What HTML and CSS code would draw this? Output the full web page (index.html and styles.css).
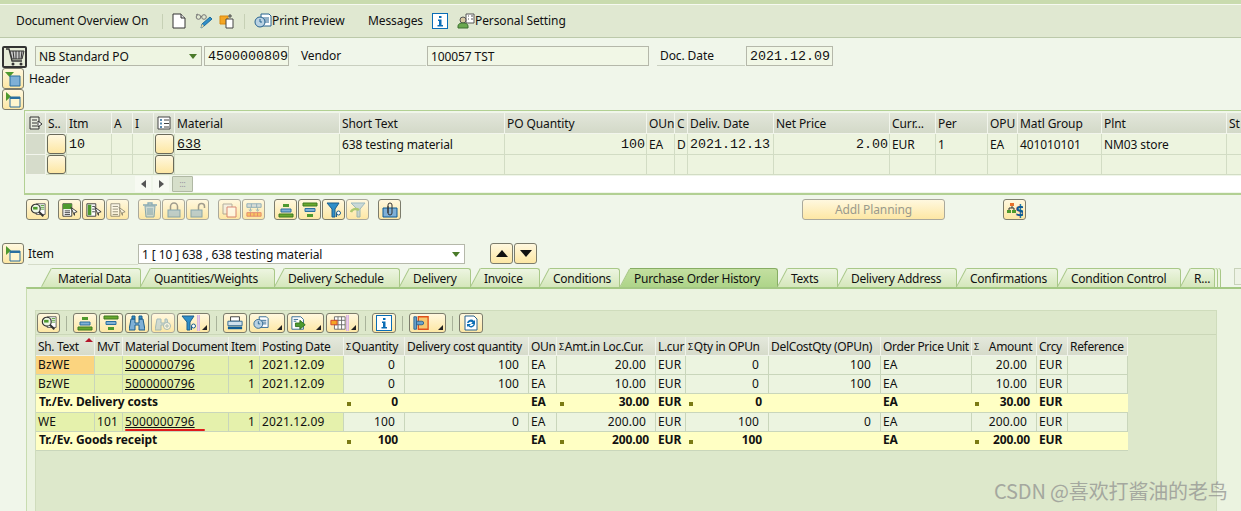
FILE: index.html
```html
<!DOCTYPE html>
<html lang="en">
<head>
<meta charset="utf-8">
<title>Purchase Order</title>
<link rel="stylesheet" href="styles.css">
</head>
<body>
<svg class="defs" width="0" height="0">
<defs>
<symbol id="i-page" viewBox="0 0 16 16"><path d="M2 1h8l4 4v10H2z" fill="#fff" stroke="#333"/><path d="M10 1v4h4" fill="#ddd" stroke="#333"/></symbol>
<symbol id="i-glasses" viewBox="0 0 18 16"><circle cx="3.500" cy="4" r="2.300" fill="none" stroke="#777"/><circle cx="9" cy="4" r="2.300" fill="none" stroke="#777"/><path d="M1 2 3 1M6 3.500h1" stroke="#777" fill="none"/><path d="M6 15l1-4 8-7 2 2-8 7z" fill="#2f8fc9" stroke="#1d6b9c"/><path d="M6 15l1-4 2 2z" fill="#f4d89a"/></symbol>
<symbol id="i-orange" viewBox="0 0 16 16"><path d="M1 3h8v8H1z" fill="#f5a623" stroke="#d98a10"/><path d="M7 6h7v9H7z" fill="#fff" stroke="#444"/><path d="M11 1v4M9 3h4" stroke="#444"/></symbol>
<symbol id="i-preview" viewBox="0 0 18 16"><path d="M7 1h8l2 2v10H7z" fill="#fff" stroke="#27628f"/><path d="M9 5h6M9 7h6M9 9h6" stroke="#27628f"/><circle cx="6" cy="9" r="5" fill="#b9d2e3" stroke="#27628f"/><path d="M6 6v3h2" stroke="#27628f" fill="none"/></symbol>
<symbol id="i-info" viewBox="0 0 16 16"><rect x=".5" y=".5" width="15" height="15" fill="#fff" stroke="#0a6db5"/><rect x="7" y="3" width="2.500" height="2" fill="#0a6db5"/><path d="M6 6.500h3.500V12H11v1.500H5.500V12H7V8H6z" fill="#0a6db5"/></symbol>
<symbol id="i-person" viewBox="0 0 18 16"><path d="M9 1h8v9H9z" fill="#fff" stroke="#555"/><path d="M11 3h1M14 3h2M11 6h1M14 6h2" stroke="#555"/><circle cx="6" cy="7" r="3" fill="#d8c9a0" stroke="#555"/><path d="M1 15v-2c0-2 2-3 5-3s5 1 5 3v2z" fill="#6aa84f" stroke="#3c7030"/></symbol>
<symbol id="i-cart" viewBox="0 0 20 18"><path d="M1 1h3l3 12h10" fill="none" stroke="#333" stroke-width="1.300"/><path d="M5 3h14l-2 8H7z" fill="#ccc" stroke="#333"/><path d="M8 3l1 8M11 3v8M14 3v8M17 3l-1 8" stroke="#333"/><circle cx="8" cy="16" r="1.500" fill="#333"/><circle cx="16" cy="16" r="1.500" fill="#333"/></symbol>
<symbol id="i-collapse" viewBox="0 0 16 16"><path d="M0 1h9L4.500 6z" fill="#4e9a2e"/><path d="M5 5h10v10H5z" fill="#7fb0d6" stroke="#2a6fa0"/></symbol>
<symbol id="i-expand" viewBox="0 0 16 16"><path d="M1 0v9l5-4.500z" fill="#4e9a2e"/><path d="M5 5h10v10H5z" fill="#fff6cf" stroke="#2a6fa0"/><path d="M5 5h10v2H5z" fill="#2a6fa0"/></symbol>
<symbol id="i-zoom" viewBox="0 0 18 16"><path d="M7 1h10v12H7z" fill="#fff" stroke="#555"/><path d="M12 3h4M12 5h4M12 7h4" stroke="#4e9a2e"/><circle cx="6.500" cy="6.500" r="5" fill="#eef7e6" stroke="#333" stroke-width="1.300"/><path d="M3.500 6h5" stroke="#4e9a2e" stroke-width="3"/><path d="M10 10l5 5" stroke="#333" stroke-width="2.200"/></symbol>
<symbol id="i-selall" viewBox="0 0 18 16"><path d="M1 1h10v14H1z" fill="#fff" stroke="#333"/><path d="M1 1h10v6H1z" fill="#4e9a2e"/><path d="M3 9h6M3 11h6M3 13h6" stroke="#333"/><path d="M10 5l7 5-3 1v3z" fill="#fff" stroke="#333"/></symbol>
<symbol id="i-selblk" viewBox="0 0 18 16"><path d="M1 1h10v14H1z" fill="#fff" stroke="#333"/><path d="M2 2h4v12H2z" fill="#4e9a2e"/><path d="M7 4h3M7 7h3M7 10h3" stroke="#333"/><path d="M10 5l7 5-3 1v3z" fill="#fff" stroke="#333"/></symbol>
<symbol id="i-desel" viewBox="0 0 18 16"><path d="M1 1h10v14H1z" fill="#fff" stroke="#333"/><path d="M3 4h6M3 7h6M3 10h6M3 13h6" stroke="#333"/><path d="M10 5l7 5-3 1v3z" fill="#fff" stroke="#333"/></symbol>
<symbol id="i-trash" viewBox="0 0 16 16"><path d="M1 3h14M6 3V1h4v2" fill="none" stroke="#2a6fa0" stroke-width="1.300"/><path d="M3 4h10l-1 11H4z" fill="#a9c8de" stroke="#2a6fa0"/><path d="M6 6v7M8 6v7M10 6v7" stroke="#2a6fa0"/></symbol>
<symbol id="i-lock" viewBox="0 0 16 16"><path d="M4.500 8V4.500a3.500 3.500 0 0 1 7 0V8" fill="none" stroke="#555" stroke-width="1.500"/><rect x="2" y="8" width="12" height="7" fill="#8db4d3" stroke="#2a6fa0"/></symbol>
<symbol id="i-unlock" viewBox="0 0 16 16"><path d="M8.500 8V4.500a3 3 0 0 1 6 0V6" fill="none" stroke="#555" stroke-width="1.500"/><rect x="1" y="8" width="11" height="7" fill="#8db4d3" stroke="#2a6fa0"/></symbol>
<symbol id="i-copy" viewBox="0 0 16 16"><path d="M1 2h9v10H1z" fill="#eee" stroke="#777"/><path d="M5 5h9v10H5z" fill="#fff" stroke="#b33"/></symbol>
<symbol id="i-cols" viewBox="0 0 18 16"><path d="M1 1h16v4H1z" fill="#bcd" stroke="#2a6fa0"/><path d="M6 1v4M12 1v4" stroke="#2a6fa0"/><path d="M5 6v2M3.500 7.500 5 9.500l1.500-2M13 6v2M11.500 7.500l1.500 2 1.500-2" stroke="#2a6fa0" fill="none"/><path d="M1 11h16v4H1z" fill="#f5a623" stroke="#c33"/><path d="M5 11v4M9 11v4M13 11v4" stroke="#c33"/></symbol>
<symbol id="i-asc" viewBox="0 0 16 16"><path d="M5 2h6v3H5z" fill="#4e9a2e"/><path d="M3 7h10v3H3z" fill="#7fb0d6" stroke="#2a6fa0"/><path d="M1 12h14v3H1z" fill="#6aa82e" stroke="#3c7a20"/></symbol>
<symbol id="i-desc" viewBox="0 0 16 16"><path d="M1 1h14v3H1z" fill="#6aa82e" stroke="#3c7a20"/><path d="M3 6.500h10v3H3z" fill="#7fb0d6" stroke="#2a6fa0"/><path d="M5 12h6v3H5z" fill="#4e9a2e"/></symbol>
<symbol id="i-filter" viewBox="0 0 16 16"><path d="M1 1h12L9 7v8H6V7z" fill="#2f8fc9" stroke="#1d5f8c"/><circle cx="12.500" cy="11" r="2" fill="#fff" stroke="#1d5f8c"/><path d="M10.500 11v4" stroke="#1d5f8c"/></symbol>
<symbol id="i-unfilter" viewBox="0 0 16 16"><path d="M1 1h14l-5 6v8H7V7z" fill="#9fc3de" stroke="#4f8bb0"/><path d="M1 10c1-3 5-4 8-2" fill="none" stroke="#6aa82e" stroke-width="2.500"/></symbol>
<symbol id="i-clip" viewBox="0 0 16 16"><path d="M1 6h14v9H1z" fill="#7fb0d6" stroke="#0d5b94"/><path d="M6 11V3a2 2 0 0 1 4 0v8a2 2 0 0 1-4 0V4" fill="none" stroke="#333"/></symbol>
<symbol id="i-dollar" viewBox="0 0 16 16"><path d="M3 1h4v3H3z" fill="#e8702a"/><path d="M0 8h4v3H0zM5 8h4v3H5z" fill="#4e9a2e"/><path d="M5 4v2M2 8V6h5v2" fill="none" stroke="#333"/><text class="dollar" x="8" y="14">$</text></symbol>
<symbol id="i-binoc" viewBox="0 0 16 16"><path d="M2 4h4v4h4V4h4l2 11H10V10H6v5H0z" fill="#7fb0d6" stroke="#1d5f8c"/><path d="M3 1h3v3H3zM10 1h3v3h-3z" fill="#2f8fc9" stroke="#1d5f8c"/></symbol>
<symbol id="i-binplus" viewBox="0 0 16 16"><path d="M2 4h4v4h4V4h2l1 5H10v1H6v5H0z" fill="#a9c8de" stroke="#5f92b0"/><circle cx="12" cy="11" r="3.500" fill="#fff" stroke="#5f92b0"/><path d="M10 11h4M12 9v4" stroke="#5f92b0"/></symbol>
<symbol id="i-print" viewBox="0 0 18 16"><path d="M4 1h10v5H4z" fill="#fff" stroke="#333"/><path d="M1 6h16v5H1z" fill="#cfe0ec" stroke="#27628f"/><path d="M1 12h16v3H1z" fill="#0d5b94"/></symbol>
<symbol id="i-export" viewBox="0 0 18 16"><path d="M1 1h10l3 3v11H1z" fill="#fff" stroke="#27628f"/><path d="M3 4h5M3 6h3" stroke="#27628f"/><path d="M5 8h5V5l6 5-6 5v-3H5z" fill="#4e9a2e" stroke="#2f6f1c"/></symbol>
<symbol id="i-layout" viewBox="0 0 18 16"><path d="M5 1h12v14H5z" fill="#fff" stroke="#666"/><path d="M9 1v14M13 1v14M5 5h12M5 10h12" stroke="#666"/><path d="M1 5h7v5H1z" fill="#f5a623" stroke="#d0402a"/></symbol>
<symbol id="i-bridge" viewBox="0 0 18 16"><path d="M6 1h11v14H6z" fill="#f6c870" stroke="#e0501a" stroke-width="1.500"/><path d="M1 1h3v14H1z" fill="#6aa0c8" stroke="#27628f"/><path d="M4 6h6a2 2 0 0 1 0 4H4z" fill="#6aa0c8" stroke="#27628f"/></symbol>
<symbol id="i-refresh" viewBox="0 0 16 16"><path d="M2 1h9l3 3v11H2z" fill="#fff" stroke="#27628f"/><path d="M4 8a4 4 0 0 1 7-2l1-1v4H8l1.500-1.500A2.500 2.500 0 0 0 5.500 8zM12 9a4 4 0 0 1-7 2l-1 1V9h4l-1.500 1.500A2.500 2.500 0 0 0 10.500 9z" fill="#0d6fb5"/></symbol>
<symbol id="i-colsel" viewBox="0 0 14 14"><path d="M1 1h9v12H1z" fill="#e8ecdf" stroke="#333"/><path d="M3 4h5M3 7h5M3 10h5" stroke="#333"/><path d="M9 5l4 3-4 3z" fill="#fff" stroke="#333"/></symbol>
<symbol id="i-config" viewBox="0 0 14 14"><path d="M1 1h12v12H1z" fill="#fff" stroke="#444"/><path d="M3 3h2v2H3zM3 6.500h2v2H3zM3 10h2v2H3z" fill="#5a8ab0"/><path d="M7 4h5M7 7.500h5M7 11h5" stroke="#444"/></symbol>
</defs>
</svg>

<div class="strip"></div>
<div class="topbar">
  <span class="tb-text tb-first">Document Overview On</span>
  <i class="tsep"></i>
  <svg class="ic16 tb-page"><use href="#i-page"/></svg>
  <svg class="ic18 tb-gl"><use href="#i-glasses"/></svg>
  <svg class="ic16 tb-or"><use href="#i-orange"/></svg>
  <i class="tsep tsep2"></i>
  <svg class="ic18"><use href="#i-preview"/></svg>
  <span class="tb-text tb-pp">Print Preview</span>
  <span class="tb-text tb-msg">Messages</span>
  <svg class="ic16 tb-info"><use href="#i-info"/></svg>
  <svg class="ic18 tb-pers"><use href="#i-person"/></svg>
  <span class="tb-text tb-ps">Personal Setting</span>
</div>

<div class="headrow">
  <span class="cartbtn"><svg class="ic-cart"><use href="#i-cart"/></svg></span>
  <span class="select sel-doc">NB Standard PO<b class="caret"></b></span>
  <span class="field f-num mono">4500000809</span>
  <span class="lab lab-v">Vendor</span>
  <span class="field f-vendor">100057 TST</span>
  <span class="lab lab-d">Doc. Date</span>
  <span class="field f-date mono">2021.12.09</span>
</div>

<div class="hdrsec">
  <div class="hdr-ic">
    <span class="ib b22"><svg class="ic16"><use href="#i-collapse"/></svg></span>
    <span class="ib b22"><svg class="ic16"><use href="#i-expand"/></svg></span>
  </div>
  <span class="hdr-t">Header</span>
</div>

<div class="items">
  <div class="igrid">
    <div class="h ctr"><svg class="ic14"><use href="#i-colsel"/></svg></div><div class="h">S..</div><div class="h">Itm</div><div class="h">A</div><div class="h">I</div><div class="h ctr"><svg class="ic14"><use href="#i-config"/></svg></div><div class="h">Material</div><div class="h">Short Text</div><div class="h">PO Quantity</div><div class="h">OUn</div><div class="h">C</div><div class="h">Deliv. Date</div><div class="h">Net Price</div><div class="h">Curr...</div><div class="h">Per</div><div class="h">OPU</div><div class="h">Matl Group</div><div class="h">Plnt</div><div class="h">St</div>

    <div class="sel"></div><div class="c nb"><b class="cb"></b></div><div class="c mono">10</div><div class="c"></div><div class="c"></div><div class="c nb"><b class="cb"></b></div><div class="c mono"><u>638</u></div><div class="c">638 testing material</div><div class="c mono r">100</div><div class="c">EA</div><div class="c">D</div><div class="c mono">2021.12.13</div><div class="c mono r">2.00</div><div class="c">EUR</div><div class="c">1</div><div class="c">EA</div><div class="c">401010101</div><div class="c">NM03 store</div><div class="c"></div>

    <div class="sel"></div><div class="c nb"><b class="cb"></b></div><div class="c"></div><div class="c"></div><div class="c"></div><div class="c nb"><b class="cb"></b></div><div class="c"></div><div class="c"></div><div class="c"></div><div class="c"></div><div class="c"></div><div class="c"></div><div class="c"></div><div class="c"></div><div class="c"></div><div class="c"></div><div class="c"></div><div class="c"></div><div class="c"></div>
  </div>
  <div class="hscroll">
    <span class="sb"><b class="al"></b></span>
    <span class="sb"><b class="ar"></b></span>
    <span class="handle">:::</span>
    <span class="track"></span>
  </div>
</div>

<div class="tbtns">
  <span class="ib"><svg class="ic16"><use href="#i-zoom"/></svg></span>
  <span class="ib gapl"><svg class="ic16"><use href="#i-selall"/></svg></span>
  <span class="ib"><svg class="ic16"><use href="#i-selblk"/></svg></span>
  <span class="ib off"><svg class="ic16"><use href="#i-desel"/></svg></span>
  <span class="ib off gapl"><svg class="ic16"><use href="#i-trash"/></svg></span>
  <span class="ib off"><svg class="ic16"><use href="#i-lock"/></svg></span>
  <span class="ib off"><svg class="ic16"><use href="#i-unlock"/></svg></span>
  <span class="ib off gapl"><svg class="ic16"><use href="#i-copy"/></svg></span>
  <span class="ib off"><svg class="ic16"><use href="#i-cols"/></svg></span>
  <span class="ib gapl"><svg class="ic16"><use href="#i-asc"/></svg></span>
  <span class="ib"><svg class="ic16"><use href="#i-desc"/></svg></span>
  <span class="ib"><svg class="ic16"><use href="#i-filter"/></svg></span>
  <span class="ib off"><svg class="ic16"><use href="#i-unfilter"/></svg></span>
  <span class="ib gapl"><svg class="ic16"><use href="#i-clip"/></svg></span>
  <span class="planbtn">Addl Planning</span>
  <span class="ib finbtn"><svg class="ic16"><use href="#i-dollar"/></svg></span>
</div>

<div class="itemrow">
  <span class="ib b22"><svg class="ic16"><use href="#i-expand"/></svg></span>
  <span class="item-l">Item</span>
  <span class="select sel-item">1 [ 10 ] 638 , 638 testing material<b class="caret"></b></span>
  <span class="ib nav"><b class="tri-up"></b></span>
  <span class="ib nav"><b class="tri-dn"></b></span>
</div>

<div class="tabs">
  <span class="tab tab-first">Material Data</span>
  <span class="tab">Quantities/Weights</span>
  <span class="tab">Delivery Schedule</span>
  <span class="tab">Delivery</span>
  <span class="tab">Invoice</span>
  <span class="tab">Conditions</span>
  <span class="tab act">Purchase Order History</span>
  <span class="tab">Texts</span>
  <span class="tab">Delivery Address</span>
  <span class="tab">Confirmations</span>
  <span class="tab">Condition Control</span>
  <span class="tab tab-last">R...</span>
  <span class="tabnav"></span>
</div>

<div class="panel">
  <div class="group">
    <div class="gtools">
      <span class="ib"><svg class="ic16"><use href="#i-zoom"/></svg></span>
      <i class="gsep"></i>
      <span class="ib w24"><svg class="ic16"><use href="#i-asc"/></svg></span>
      <span class="ib w24"><svg class="ic16"><use href="#i-desc"/></svg></span>
      <span class="ib w24"><svg class="ic16"><use href="#i-binoc"/></svg></span>
      <span class="ib w24 off"><svg class="ic16"><use href="#i-binplus"/></svg></span>
      <span class="ib dd dd33"><svg class="ic16"><use href="#i-filter"/></svg><i class="pink"></i></span>
      <i class="gsep"></i>
      <span class="ib w24"><svg class="ic16"><use href="#i-print"/></svg></span>
      <span class="ib dd dd36"><svg class="ic16"><use href="#i-preview"/></svg></span>
      <span class="ib dd dd37"><svg class="ic16"><use href="#i-export"/></svg></span>
      <span class="ib dd dd33"><svg class="ic16"><use href="#i-layout"/></svg><i class="pink"></i></span>
      <i class="gsep"></i>
      <span class="ib w24"><svg class="ic16"><use href="#i-info"/></svg></span>
      <i class="gsep"></i>
      <span class="ib dd dd37"><svg class="ic16"><use href="#i-bridge"/></svg></span>
      <i class="gsep"></i>
      <span class="ib w24"><svg class="ic16"><use href="#i-refresh"/></svg></span>
    </div>
    <div class="hist">
      <div class="gh sorted">Sh. Text</div><div class="gh">MvT</div><div class="gh">Material Document</div><div class="gh">Item</div><div class="gh">Posting Date</div><div class="gh"><em>Σ</em>Quantity</div><div class="gh">Delivery cost quantity</div><div class="gh">OUn</div><div class="gh"><em>Σ</em>Amt.in Loc.Cur.</div><div class="gh">L.cur</div><div class="gh"><em>Σ</em>Qty in OPUn</div><div class="gh">DelCostQty (OPUn)</div><div class="gh">Order Price Unit</div><div class="gh"><em>Σ</em><span class="amt">Amount</span></div><div class="gh">Crcy</div><div class="gh">Reference</div>

      <div class="g k pick">BzWE</div><div class="g k"></div><div class="g k"><u>5000000796</u></div><div class="g k r">1</div><div class="g k">2021.12.09</div><div class="g r">0</div><div class="g r">100</div><div class="g">EA</div><div class="g r">20.00</div><div class="g">EUR</div><div class="g r">0</div><div class="g r">100</div><div class="g">EA</div><div class="g r">20.00</div><div class="g">EUR</div><div class="g"></div>

      <div class="g k">BzWE</div><div class="g k"></div><div class="g k"><u>5000000796</u></div><div class="g k r">1</div><div class="g k">2021.12.09</div><div class="g r">0</div><div class="g r">100</div><div class="g">EA</div><div class="g r">10.00</div><div class="g">EUR</div><div class="g r">0</div><div class="g r">100</div><div class="g">EA</div><div class="g r">10.00</div><div class="g">EUR</div><div class="g"></div>

      <div class="t s5">Tr./Ev. Delivery costs</div><div class="t r mk">0</div><div class="t"></div><div class="t">EA</div><div class="t r mk">30.00</div><div class="t">EUR</div><div class="t r mk">0</div><div class="t"></div><div class="t">EA</div><div class="t r mk">30.00</div><div class="t">EUR</div><div class="t"></div>

      <div class="g k">WE</div><div class="g k">101</div><div class="g k"><u>5000000796</u></div><div class="g k r">1</div><div class="g k">2021.12.09</div><div class="g r">100</div><div class="g r">0</div><div class="g">EA</div><div class="g r">200.00</div><div class="g">EUR</div><div class="g r">100</div><div class="g r">0</div><div class="g">EA</div><div class="g r">200.00</div><div class="g">EUR</div><div class="g"></div>

      <div class="t s5">Tr./Ev. Goods receipt</div><div class="t r mk">100</div><div class="t"></div><div class="t">EA</div><div class="t r mk">200.00</div><div class="t">EUR</div><div class="t r mk">100</div><div class="t"></div><div class="t">EA</div><div class="t r mk">200.00</div><div class="t">EUR</div><div class="t"></div>
      <i class="redline"></i>
    </div>
  </div>
</div>
<div class="watermark">CSDN @喜欢打酱油的老鸟</div>
</body>
</html>
```

FILE: styles.css
```css
* { box-sizing: border-box; }
html, body { margin: 0; height: 511px; overflow: hidden; }
body {
  width: 1241px; display: flex; flex-direction: column; position: relative;
  background: #f0f6ea; color: #111;
  font: 12px/14px "Noto Sans", sans-serif; letter-spacing: -.1px;
}
.defs { position: absolute; }
svg { display: block; flex: none; }
u { text-decoration: underline; }
em { font-style: normal; font-size: 9px; }
.dollar { font: bold 15px "DejaVu Sans", sans-serif; fill: #0d5b94; text-anchor: start; }
.ic16 { width: 16px; height: 16px; }
.ic18 { width: 18px; height: 16px; }
.ic14 { width: 14px; height: 14px; }
.ic-cart { width: 20px; height: 18px; }
.mono { font-family: "Liberation Mono", monospace; font-size: 13.33px; letter-spacing: 0; }

.strip { height: 4px; background: #c9dbae; flex: none; }
.topbar {
  height: 34px; flex: none; display: flex; align-items: center;
  background: #e0e8d1; border-top: 1px solid #f6f9f0; border-bottom: 1px solid #bcc9aa;
}
.tb-text { white-space: nowrap; }
.tb-first { margin-left: 16px; width: 146px; }
.tsep { width: 1px; height: 15px; background: #c6d0b5; }
.tb-page { margin-left: 8px; }
.tb-gl { margin-left: 8px; }
.tb-or { margin-left: 6px; }
.tsep2 { margin-left: 9px; }
.tsep2 + svg { margin-left: 9px; }
.tb-pp { width: 96px; }
.tb-msg { width: 64px; }
.tb-pers { margin-left: 9px; }

.headrow { height: 21px; margin-top: 8px; flex: none; display: flex; }
.cartbtn {
  width: 25px; height: 22px; margin-left: 2px; border: 2px solid #333; border-radius: 2px;
  background: #e6ecd8; display: flex; align-items: center; justify-content: center;
}
.select, .field {
  height: 20px; border: 1px solid #b5b8aa; background: #f1f7e6;
  padding-left: 3px; line-height: 19px; white-space: nowrap; position: relative; display: block;
}
.sel-doc { width: 167px; margin-left: 8px; background: #eef5e2; }
.caret {
  position: absolute; right: 4px; top: 7px; width: 0; height: 0;
  border: 4px solid transparent; border-top: 5px solid #4a7a2a; border-bottom: 0;
}
.f-num { width: 85px; margin-left: 2px; }
.lab { height: 20px; line-height: 20px; border-bottom: 1px solid #c9cfc0; padding-left: 3px; }
.lab-v { width: 128px; margin-left: 9px; }
.f-vendor { width: 222px; margin-left: 1px; }
.lab-d { width: 88px; margin-left: 8px; }
.f-date { width: 87px; margin-left: 1px; }

.hdrsec { height: 42px; margin-top: 1px; flex: none; display: flex; padding-left: 2px; }
.hdr-ic { display: flex; flex-direction: column; }
.hdr-t { margin: 4px 0 0 5px; }

.ib {
  width: 23px; height: 21px; flex: none; display: flex; align-items: center; justify-content: center;
  border: 1px solid #7c7c6c; border-radius: 3px;
  background: linear-gradient(#fff8df, #fde7a4);
}
.ib.off { border-color: #aaa99c; }
.ib.off svg { opacity: .55; }
.b22 { width: 22px; }

.items {
  height: 85px; margin-left: 24px; flex: none;
  border-top: 1px solid #b2d093; border-left: 1px solid #b2d093; border-bottom: 2px solid #b2d093;
  padding: 2px 0 0 1px; overflow: hidden;
}
.igrid {
  display: grid; width: 1300px;
  grid-template-columns: 20px 21px 45px 21px 21px 21px 165px 165px 142px 28px 13px 86px 116px 46px 52px 30px 84px 125px 60px;
  grid-template-rows: 21px 21px 20px;
}
.h {
  background: linear-gradient(#e2e6da, #d3d9c8); border-right: 1px solid #f2f5ec; border-bottom: 1px solid #f2f5ec;
  padding-left: 2px; line-height: 22px; white-space: nowrap; overflow: hidden;
}
.ctr { display: flex; align-items: center; justify-content: center; padding: 0; }
.c {
  background: #edf4df; border-right: 1px solid #d2dcc4; border-bottom: 1px solid #d2dcc4;
  padding: 0 2px; line-height: 22px; white-space: nowrap; overflow: hidden;
}
.c.nb { padding: 0 0 0 1px; }
.c.r { text-align: right; padding-right: 1px; }
.sel { background: #d6dccb; border-right: 1px solid #f2f5ec; border-bottom: 1px solid #f2f5ec; }
.cb {
  display: block; width: 19px; height: 100%; border: 1px solid #6a6a5a; border-radius: 3px;
  background: linear-gradient(#fff8df, #fde7a4);
}
.hscroll { display: flex; margin-top: 1px; height: 16px; padding-left: 109px; }
.sb { width: 16px; margin-right: 2px; display: flex; align-items: center; justify-content: center; background: #f7faf2; }
.al, .ar { width: 0; height: 0; border: 4px solid transparent; border-left: 0; border-right: 5px solid #555; }
.ar { border-left: 5px solid #555; border-right: 0; }
.handle {
  width: 21px; margin-left: 1px; background: #d6dfca; border: 1px solid #b0b8a4; color: #889; font-size: 8px;
  line-height: 13px; text-align: center; border-radius: 1px;
}
.track { flex: 1; background: #fff; }

.tbtns { height: 21px; margin: 4px 0 0 26px; flex: none; display: flex; gap: 1px; }
.gapl { margin-left: 8px; }
.planbtn {
  width: 143px; height: 21px; margin-left: 400px; text-align: center; line-height: 20px; color: #9a9a8c;
  border: 1px solid #aaa99c; border-radius: 3px; background: linear-gradient(#fff8df, #fde7a4);
}
.finbtn { margin-left: 57px; }

.itemrow { height: 22px; margin-top: 23px; padding-left: 2px; flex: none; display: flex; }
.item-l { width: 110px; margin-left: 4px; line-height: 22px; border-bottom: 1px solid #d5dcc9; height: 22px; }
.sel-item { width: 327px; background: #fff; margin-top: 1px; margin-right: 25px; }
.nav { margin-right: 1px; }
.tri-up, .tri-dn { width: 0; height: 0; border: 6px solid transparent; border-bottom: 7px solid #111; border-top: 0; }
.tri-dn { border-bottom: 0; border-top: 7px solid #111; }

.tabs {
  height: 20px; margin-top: 3px; padding-left: 52px; flex: none; display: grid;
  grid-template-columns: 89px 124px 115px 61px 59px 70px 148px 50px 109px 91px 113px 24px 16px;
  column-gap: 10px;
}
.tab {
  height: 19px; position: relative; padding-left: 3px; line-height: 20px; white-space: nowrap; letter-spacing: -.25px;
  background: linear-gradient(#edf5e1, #d5e7bb);
  border-top: 1px solid #a9c888; border-right: 1px solid #a9c888; border-radius: 0 3px 0 0;
}
.tab-first { padding-left: 6px; }
.tab::before {
  content: ""; position: absolute; left: -10px; top: -1px; width: 10px; height: 19px; z-index: -1;
  background: linear-gradient(#edf5e1, #d5e7bb);
  clip-path: polygon(0 100%, 100% 0, 100% 100%);
}
.tab::after {
  content: ""; position: absolute; left: -10px; bottom: 0; width: 21px; height: 1px;
  background: #a9c888; transform-origin: left bottom; transform: rotate(-62deg);
}
.tab.act, .tab.act::before { background: linear-gradient(#c3dfa0, #add488); }
.tab.act { border-color: #87ad63; height: 20px; padding-left: 4px; }
.tab.act::before { height: 20px; }
.tab-last { box-shadow: 2px 0 0 #edf5e1, 3px 0 0 #a9c888, 5px 0 0 #edf5e1, 6px 0 0 #a9c888; }
.tabnav { width: 7px; height: 17px; margin-left: 9px; background: #eef3e6; border: 1px solid #c8d2ba; border-right: 0; }

.panel {
  flex: 1; margin-left: 26px; margin-top: -1px; position: relative;
  background: #ebf3e0; border-top: 2px solid #a4c884; border-left: 1px solid #c8dcb0;
  padding: 21px 0 0 8px;
}
.group { width: 1182px; height: 100%; background: #dde8cb; border: 1px solid #cfdcbc; border-bottom: 0; }
.gtools { height: 24px; padding: 2px 0 0 1px; display: flex; gap: 2px; border-bottom: 1px solid #cbd7b8; }
.gsep { width: 1px; height: 15px; margin: 3px 4px 0; background: #a9b39a; }
.w24 { width: 24px; }
.gtools .ib { height: 20px; }
.dd { position: relative; justify-content: flex-start; padding-left: 3px; }
.dd::after {
  content: ""; position: absolute; right: 2px; bottom: 2px; width: 0; height: 0;
  border-left: 5px solid transparent; border-bottom: 5px solid #222;
}
.dd33 { width: 33px; }
.dd36 { width: 36px; }
.dd37 { width: 37px; }
.pink { position: absolute; left: 19px; top: 1px; width: 3px; height: 16px; border: 1px solid #d8b6e0; border-width: 0 1px; background: #eccbe6; }

.hist {
  display: grid; position: relative; width: 1092px; margin-top: 2px;
  grid-template-columns: 59px 28px 106px 31px 84px 61px 124px 28px 99px 30px 83px 112px 91px 65px 31px 60px;
  grid-template-rows: 19px repeat(5, 19px);
}
.gh, .g, .t { padding: 0 2px; line-height: 18px; white-space: nowrap; overflow: hidden; }
.gh { background: linear-gradient(#e4e8dc, #d6dbca); border-right: 1px solid #f0f3ea; border-bottom: 1px solid #f0f3ea; line-height: 20px; letter-spacing: -.32px; }
.gh em { margin-right: 1px; vertical-align: 1px; }
.amt { margin-left: 9px; }
.sorted { position: relative; }
.sorted::after {
  content: ""; position: absolute; right: 1px; top: 1px; width: 0; height: 0;
  border: 4px solid transparent; border-top: 0; border-bottom: 4px solid #b4152a;
}
.g { background: #ecf4e0; border-right: 1px solid #c9d6bb; border-bottom: 1px solid #c9d6bb; letter-spacing: .1px; }
.k { background: #e5f1ac; }
.pick { background: #fbd47f; }
.r { text-align: right; }
.g.r { padding-right: 9px; }
.k.r { padding-right: 4px; }
.t { background: #ffffc4; border-bottom: 1px solid #c9d6bb; font-weight: bold; position: relative; line-height: 16px; }
.t.r { padding-right: 7px; }
.s5 { grid-column: span 5; padding-left: 3px; }
.mk::before { content: ""; position: absolute; left: 3px; top: 8px; width: 4px; height: 4px; background: #7a7a14; }
.redline { position: absolute; left: 89px; top: 92px; width: 80px; height: 2px; background: #e01b1b; border-radius: 1px; }

.watermark {
  position: absolute; left: 994px; top: 479px; font: 20px/24px "Noto Sans CJK SC", "Liberation Sans", sans-serif;
  color: #8d8d8d; opacity: .7; white-space: nowrap; letter-spacing: -.15px;
}
```
